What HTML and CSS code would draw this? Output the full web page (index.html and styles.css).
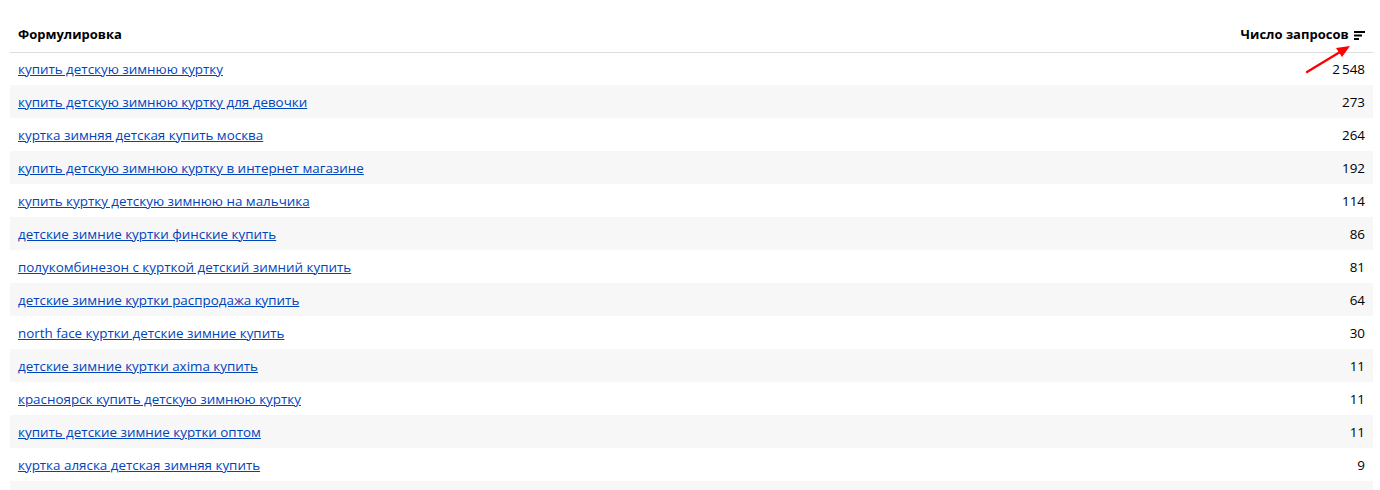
FILE: index.html
```html
<!DOCTYPE html>
<html lang="ru">

<head>
    <meta charset="UTF-8">
    <title>Формулировки</title>
    <link rel="stylesheet" href="styles.css">
</head>

<body>
    <div class="wrap">
        <table class="phrases">
            <thead>
                <tr>
                    <th class="col-phrase">Формулировка</th>
                    <th class="col-count">Число запросов
                        <svg class="sort-icon" width="11" height="9" viewBox="0 0 11 9">
                            <rect x="0" y="0" width="11" height="2" fill="#000"/>
                            <rect x="0" y="3.5" width="8" height="2" fill="#000"/>
                            <rect x="0" y="7" width="5" height="2" fill="#000"/>
                        </svg>
                    </th>
                </tr>
            </thead>
            <tbody>
                <tr><td><a href="#">купить детскую зимнюю куртку</a></td><td class="num">2&#8201;548</td></tr>
                <tr><td><a href="#">купить детскую зимнюю куртку для девочки</a></td><td class="num">273</td></tr>
                <tr><td><a href="#">куртка зимняя детская купить москва</a></td><td class="num">264</td></tr>
                <tr><td><a href="#">купить детскую зимнюю куртку в интернет магазине</a></td><td class="num">192</td></tr>
                <tr><td><a href="#">купить куртку детскую зимнюю на мальчика</a></td><td class="num">114</td></tr>
                <tr><td><a href="#">детские зимние куртки финские купить</a></td><td class="num">86</td></tr>
                <tr><td><a href="#">полукомбинезон с курткой детский зимний купить</a></td><td class="num">81</td></tr>
                <tr><td><a href="#">детские зимние куртки распродажа купить</a></td><td class="num">64</td></tr>
                <tr><td><a href="#">north face куртки детские зимние купить</a></td><td class="num">30</td></tr>
                <tr><td><a href="#">детские зимние куртки axima купить</a></td><td class="num">11</td></tr>
                <tr><td><a href="#">красноярск купить детскую зимнюю куртку</a></td><td class="num">11</td></tr>
                <tr><td><a href="#">купить детские зимние куртки оптом</a></td><td class="num">11</td></tr>
                <tr><td><a href="#">куртка аляска детская зимняя купить</a></td><td class="num">9</td></tr>
                <tr><td></td><td class="num"></td></tr>
            </tbody>
        </table>

        <!-- red pointer drawn over the header -->
        <svg class="pointer" width="50" height="34" viewBox="0 0 50 34">
            <line x1="3" y1="30" x2="36" y2="10" stroke="#f00" stroke-width="2.4" stroke-linecap="round"/>
            <polygon points="46,4 32,6 38,15" fill="#f00"/>
        </svg>
    </div>
</body>

</html>
```

FILE: styles.css
```css
body {
    margin: 0;
    background: #fff;
    font-family: "Open Sans", Arial, sans-serif;
    font-size: 13px;
    color: #000;
}

.wrap {
    position: relative;
    padding: 0 7px 0 10px;
}

.phrases {
    width: 100%;
    border-collapse: collapse;
}

.phrases th {
    height: 52px;
    padding: 0 8px 9px;
    vertical-align: bottom;
    font-weight: bold;
    border-bottom: 1px solid #ddd;
    box-sizing: border-box;
}

.col-phrase {
    text-align: left;
}

.col-count {
    text-align: right;
    white-space: nowrap;
}

.sort-icon {
    margin-left: 2px;
    vertical-align: -1px;
}

.phrases td {
    height: 33px;
    padding: 0 8px;
    box-sizing: border-box;
    font-size: 13.4px;
}

.phrases tbody tr:nth-child(even) {
    background: #f7f7f7;
}

.phrases a {
    color: #0044bb;
    text-decoration: underline;
}

.num {
    text-align: right;
}

.pointer {
    position: absolute;
    left: 1304px;
    top: 42px;
}
```
